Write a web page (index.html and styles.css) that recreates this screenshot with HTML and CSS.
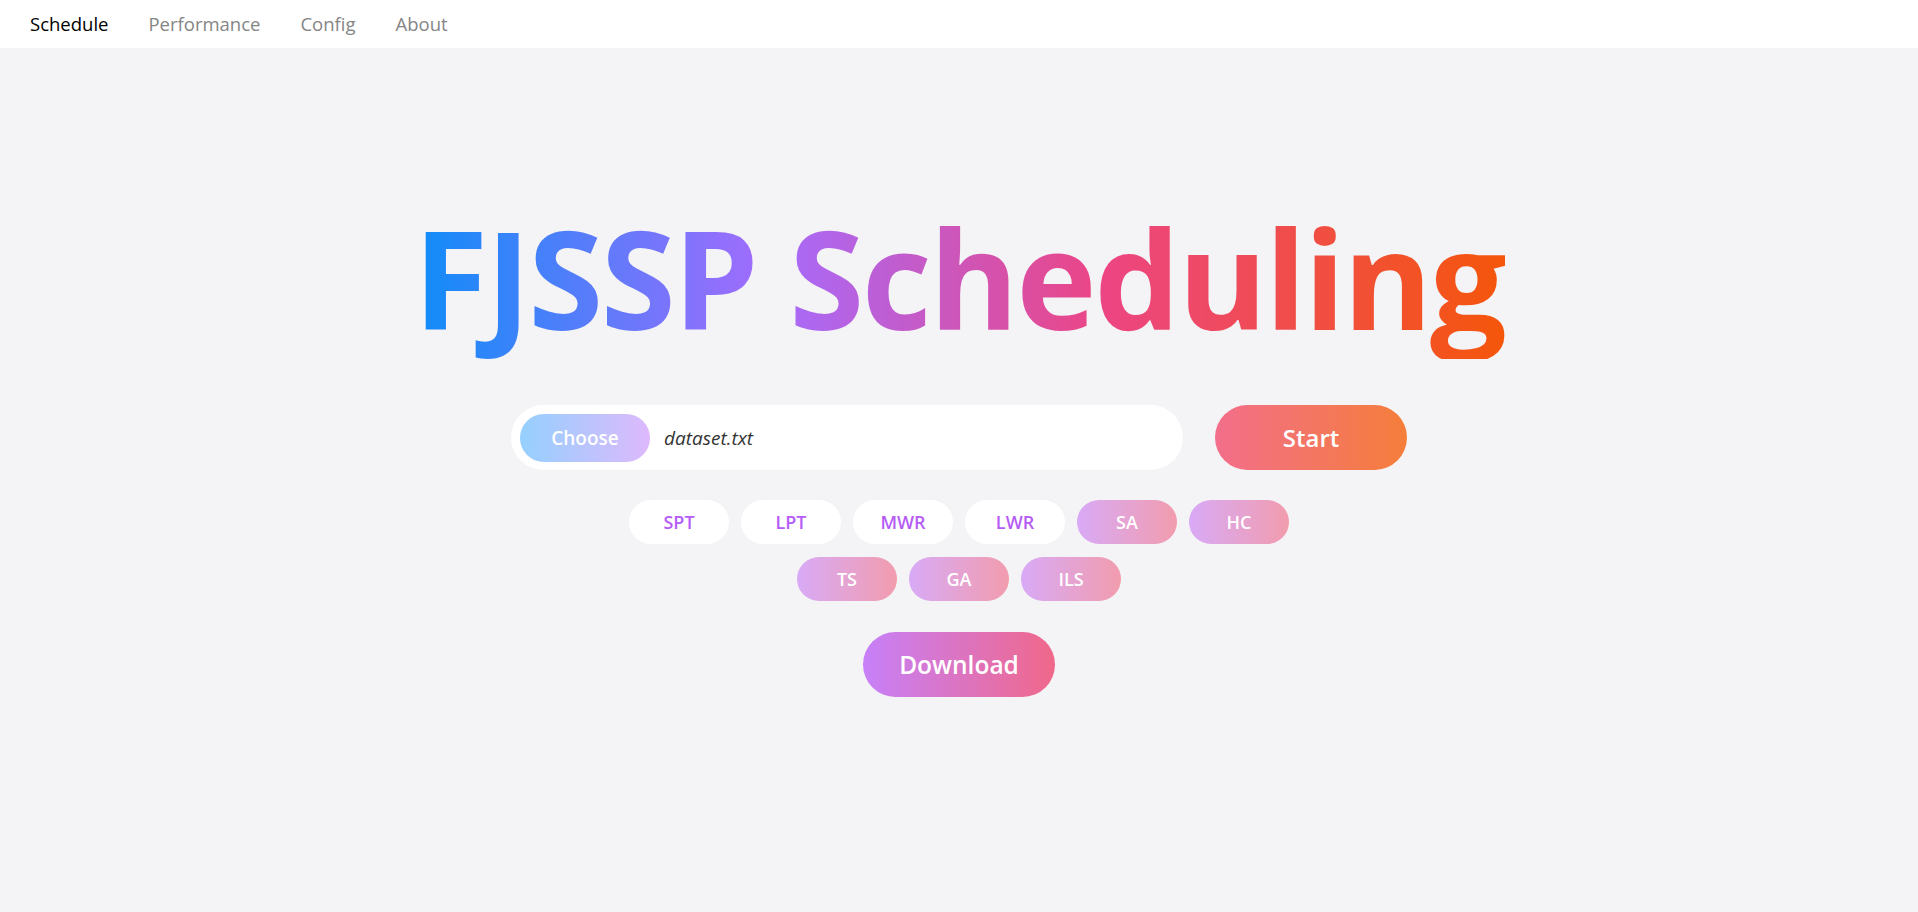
FILE: index.html
```html
<!DOCTYPE html>
<html lang="en">
<head>
<meta charset="utf-8">
<title>FJSSP Scheduling</title>
<link rel="stylesheet" href="styles.css">
</head>
<body>
<nav class="topnav">
  <a class="nav-link active" href="#">Schedule</a>
  <a class="nav-link" href="#">Performance</a>
  <a class="nav-link" href="#">Config</a>
  <a class="nav-link" href="#">About</a>
</nav>
<main class="hero">
  <h1 class="title">FJSSP Scheduling</h1>
  <div class="file-row">
    <div class="file-box">
      <button class="choose-btn">Choose</button>
      <span class="file-name">dataset.txt</span>
    </div>
    <button class="start-btn">Start</button>
  </div>
  <div class="algos">
    <button class="chip">SPT</button>
    <button class="chip">LPT</button>
    <button class="chip">MWR</button>
    <button class="chip">LWR</button>
    <button class="chip chip-on">SA</button>
    <button class="chip chip-on">HC</button>
    <button class="chip chip-on">TS</button>
    <button class="chip chip-on">GA</button>
    <button class="chip chip-on">ILS</button>
  </div>
  <button class="download-btn">Download</button>
</main>
</body>
</html>
```

FILE: styles.css
```css
* { box-sizing: border-box; }
html, body {
  margin: 0;
  padding: 0;
}
body {
  background: #f4f4f6;
  font-family: "Open Sans", "Noto Sans", sans-serif;
  min-height: 912px;
}
.topnav {
  display: flex;
  align-items: center;
  height: 48px;
  background: #ffffff;
  padding-left: 10px;
}
.nav-link {
  padding: 0 20px;
  font-size: 18.5px;
  color: #858585;
  text-decoration: none;
  line-height: 48px;
}
.nav-link.active { color: #000000; }

.hero {
  display: flex;
  flex-direction: column;
  align-items: center;
}
.title {
  margin: 148px 0 0;
  font-size: 136px;
  line-height: 1.2;
  font-weight: 700;
  letter-spacing: -2.4px;
  background: linear-gradient(to right, #0f8cf8 0%, #a66bfd 33%, #ec4584 63%, #f5560a 100%);
  -webkit-background-clip: text;
  background-clip: text;
  color: transparent;
}
.file-row {
  display: flex;
  gap: 32px;
  margin-top: 46px;
}
.file-box {
  display: flex;
  align-items: center;
  width: 672px;
  height: 65px;
  background: #ffffff;
  border-radius: 33px;
  padding: 0 9px;
}
.choose-btn {
  width: 130px;
  height: 48px;
  border: none;
  border-radius: 24px;
  background: linear-gradient(to right, #95d0fe, #ddb9fc);
  color: #ffffff;
  font-family: inherit;
  font-size: 19px;
  font-weight: 600;
  cursor: pointer;
}
.file-name {
  margin-left: 14px;
  font-size: 19px;
  font-style: italic;
  color: #333333;
}
.start-btn {
  width: 192px;
  height: 65px;
  border: none;
  border-radius: 33px;
  background: linear-gradient(to right, #f26e8b, #f57e3a);
  color: #ffffff;
  font-family: inherit;
  font-size: 24px;
  font-weight: 600;
}
.algos {
  display: flex;
  flex-wrap: wrap;
  justify-content: center;
  gap: 13px 12px;
  width: 672px;
  margin-top: 30px;
}
.chip {
  width: 100px;
  height: 44px;
  border: none;
  border-radius: 22px;
  background: #ffffff;
  color: #b65cf6;
  font-family: inherit;
  font-size: 18px;
  font-weight: 600;
}
.chip-on {
  background: linear-gradient(to right, #d8aaf6, #f29cae);
  color: #ffffff;
}
.download-btn {
  margin-top: 31px;
  width: 192px;
  height: 65px;
  border: none;
  border-radius: 33px;
  background: linear-gradient(to right, #c780f9, #f0688a);
  color: #ffffff;
  font-family: inherit;
  font-size: 24.5px;
  font-weight: 600;
}
```
